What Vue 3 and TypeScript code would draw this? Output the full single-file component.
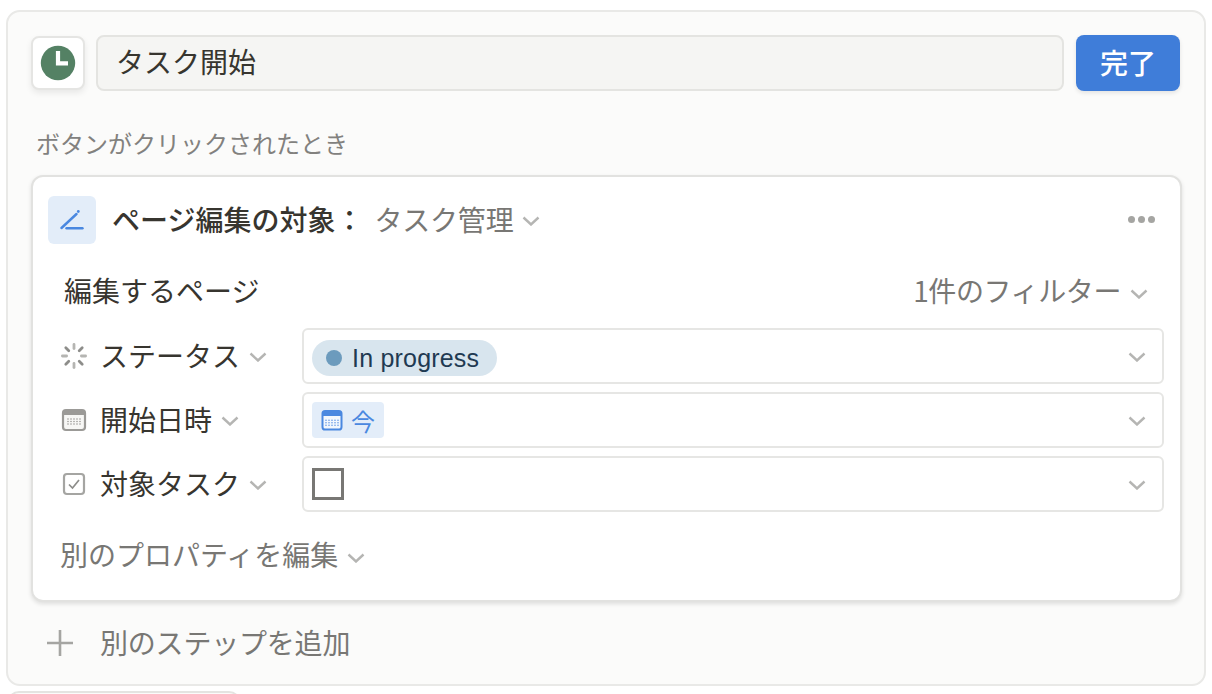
<script setup lang="ts">
interface Row { label: string; icon: string }
const ticks: number[] = [0, 45, 90, 135, 180, 225, 270, 315]
const dots: [number, number][] = []
for (const y of [11.5, 14, 16.5]) for (const x of [6, 9, 12, 15, 18]) dots.push([x, y])
const rows: Row[] = [
  { label: 'ステータス', icon: 'status' },
  { label: '開始日時', icon: 'date' },
  { label: '対象タスク', icon: 'check' },
]
</script>

<template>
  <div class="page">
    <div class="panel">
      <div class="top">
        <div class="emoji">
          <svg width="36" height="36" viewBox="0 0 36 36"><circle cx="18" cy="18" r="17.2" fill="#548164" /><path d="M18 6v12.3h10" fill="none" stroke="#fff" stroke-width="4.2" /></svg>
        </div>
        <div class="name">タスク開始</div>
        <button class="done">完了</button>
      </div>
      <div class="when">ボタンがクリックされたとき</div>
      <div class="card">
        <div class="head">
          <div class="pen">
            <svg width="24" height="24" viewBox="0 0 24 24"><path d="M1.5 20 16.5 6" fill="none" stroke="#4a88e0" stroke-width="2.4" stroke-linecap="round" /><circle cx="18.3" cy="3.5" r="1.4" fill="#4a88e0" /><path d="M6.5 20.2h16" fill="none" stroke="#4a88e0" stroke-width="2.4" stroke-linecap="round" /></svg>
          </div>
          <span class="title">ページ編集の対象：</span>
          <span class="target">タスク管理</span>
          <svg class="chev" width="18" height="10" viewBox="0 0 18 10"><path d="M1.5 1.5 9 8.5l7.5-7" /></svg>
          <div class="more"><i></i><i></i><i></i></div>
        </div>
        <div class="sub">
          <span class="subtitle">編集するページ</span>
          <span class="filter">1件のフィルター</span>
          <svg class="chev" width="18" height="10" viewBox="0 0 18 10"><path d="M1.5 1.5 9 8.5l7.5-7" /></svg>
        </div>
        <div class="rows">
          <div v-for="r in rows" :key="r.label" class="row">
            <div class="prop">
              <svg v-if="r.icon === 'status'" class="pi" width="28" height="28" viewBox="0 0 28 28">
                <rect v-for="a in ticks" :key="a" x="12.6" y="1" width="2.8" height="7" rx="1.4" :fill="a % 90 === 0 ? '#b5b5b2' : '#8d8d8a'" :transform="`rotate(${a} 14 14)`" />
              </svg>
              <svg v-else-if="r.icon === 'date'" class="pi" width="28" height="28" viewBox="0 0 28 28">
                <rect x="3" y="4" width="22" height="20" rx="3" fill="#f7f7f5" stroke="#9b9a97" stroke-width="2.2" />
                <path d="M3 9V7a3 3 0 0 1 3-3h16a3 3 0 0 1 3 3v2z" fill="#9b9a97" />
                <circle v-for="(d, i) in dots" :key="i" :cx="d[0] + 2" :cy="d[1] + 1.5" r=".8" fill="#9b9a97" />
              </svg>
              <svg v-else class="pi" width="28" height="28" viewBox="0 0 28 28">
                <rect x="4" y="4" width="20" height="20" rx="3" fill="#fff" stroke="#a5a5a2" stroke-width="2.2" />
                <path d="m9 14.5 3.5 3.5 6.5-8" fill="none" stroke="#8d8d8a" stroke-width="1.7" />
              </svg>
              <span class="plabel">{{ r.label }}</span>
              <svg class="chev" width="18" height="10" viewBox="0 0 18 10"><path d="M1.5 1.5 9 8.5l7.5-7" /></svg>
            </div>
            <div class="field">
              <span v-if="r.icon === 'status'" class="pill"><i class="dot"></i>In progress</span>
              <span v-else-if="r.icon === 'date'" class="now">
                <svg width="24" height="24" viewBox="0 0 24 24">
                  <rect x="2.5" y="3" width="19" height="18.5" rx="2.6" fill="#f2f7fd" stroke="#4a88e0" stroke-width="2" />
                  <path d="M2.5 8V5.6A2.6 2.6 0 0 1 5.1 3h13.8a2.6 2.6 0 0 1 2.6 2.6V8z" fill="#4a88e0" />
                  <circle v-for="(d, i) in dots" :key="i" :cx="d[0]" :cy="d[1] + .8" r=".7" fill="#4a88e0" />
                </svg>
                <span>今</span>
              </span>
              <span v-else class="box"></span>
              <svg class="chev end" width="18" height="10" viewBox="0 0 18 10"><path d="M1.5 1.5 9 8.5l7.5-7" /></svg>
            </div>
          </div>
        </div>
        <div class="another">
          <span>別のプロパティを編集</span>
          <svg class="chev" width="18" height="10" viewBox="0 0 18 10"><path d="M1.5 1.5 9 8.5l7.5-7" /></svg>
        </div>
      </div>
      <div class="add">
        <svg width="28" height="28" viewBox="0 0 28 28"><path d="M14 1v26M1 14h26" fill="none" stroke="#a5a5a2" stroke-width="2.6" /></svg>
        <span>別のステップを追加</span>
      </div>
    </div>
    <div class="stub"></div>
  </div>
</template>

<style>
html, body { margin: 0; background: #fff; overflow: hidden; }
</style>

<style scoped>
.page {
  height: 694px;
  box-sizing: border-box;
  padding: 10px 6px 0 6px;
  overflow: hidden;
  font-family: "Noto Sans CJK JP", "Liberation Sans", sans-serif;
  color: #37352f;
}
.panel {
  height: 676px;
  box-sizing: border-box;
  padding: 23px 24px 0 23px;
  background: #fbfbfa;
  border: 2px solid #e9e9e7;
  border-radius: 14px;
}
.top { display: flex; align-items: center; gap: 11px; height: 56px; }
.emoji {
  width: 54px;
  height: 54px;
  flex: none;
  box-sizing: border-box;
  display: flex;
  align-items: center;
  justify-content: center;
  background: #fff;
  border: 2px solid #e5e5e3;
  border-radius: 8px;
  box-shadow: 0 3px 6px rgba(15, 15, 15, .08);
}
.name {
  flex: 1;
  height: 56px;
  box-sizing: border-box;
  padding-left: 18px;
  font-size: 28px;
  line-height: 49px;
  background: #f5f5f3;
  border: 2px solid #e4e4e1;
  border-radius: 8px;
}
.done {
  width: 104px;
  height: 56px;
  flex: none;
  margin-left: 1px;
  padding: 0 0 3px;
  border: 0;
  border-radius: 8px;
  background: #3f7dd9;
  color: #fff;
  font: 500 28px "Noto Sans CJK JP", sans-serif;
  box-shadow: 0 2px 4px rgba(15, 15, 15, .1);
}
.when { margin: 37px 0 0 5px; height: 30px; font-size: 24px; line-height: 30px; color: #82817e; }
.card {
  height: 427px;
  width: 1151px;
  margin-top: 17px;
  box-sizing: border-box;
  background: #fff;
  border: 2px solid #e2e2e0;
  border-radius: 12px;
  box-shadow: 0 2px 4px rgba(15, 15, 15, .12);
}
.head { display: flex; align-items: center; height: 48px; margin: 19px 0 0 15px; }
.pen {
  width: 48px;
  height: 48px;
  display: flex;
  align-items: center;
  justify-content: center;
  flex: none;
  border-radius: 6px;
  background: #e3edf9;
}
.title { margin-left: 16px; padding-bottom: 3px; font-size: 28px; font-weight: 500; }
.target { margin-left: 11px; padding-bottom: 3px; font-size: 28px; color: #787774; letter-spacing: -.2px; }
.chev { flex: none; margin-left: 9px; margin-top: 2px; fill: none; stroke: #b5b5b3; stroke-width: 2.4; }
.more { display: flex; gap: 3px; margin: 0 25px 2px auto; }
.more i { width: 7px; height: 7px; border-radius: 50%; background: #a5a5a2; }
.sub { display: flex; align-items: center; height: 40px; margin: 27px 32px 0 31px; }
.sub .chev { margin-top: 5px; }
.subtitle { padding-bottom: 2px; font-size: 28px; }
.filter { margin-left: auto; padding-bottom: 2px; font-size: 28px; color: #787774; letter-spacing: -.4px; }
.rows { display: flex; flex-direction: column; gap: 8px; margin: 17px 16px 0 0; }
.row { display: flex; align-items: center; height: 56px; }
.prop { width: 242px; margin-left: 27px; display: flex; align-items: center; }
.pi { flex: none; }
.plabel { margin-left: 12px; padding-bottom: 2px; font-size: 28px; }
.field {
  flex: 1;
  height: 56px;
  box-sizing: border-box;
  display: flex;
  align-items: center;
  padding: 0 16px 0 8px;
  border: 2px solid #e6e6e4;
  border-radius: 6px;
}
.end { margin-left: auto; }
.pill {
  display: flex;
  align-items: center;
  height: 36px;
  margin-top: 4px;
  padding: 0 18px 0 14px;
  border-radius: 18px;
  background: #d8e5ee;
  color: #1f3a52;
  font: 25px "Liberation Sans", sans-serif;
  letter-spacing: .2px;
}
.dot { width: 16px; height: 16px; border-radius: 50%; background: #6c9bbd; margin-right: 10px; }
.now {
  display: flex;
  align-items: center;
  gap: 7px;
  height: 36px;
  padding: 0 0 0 8px;
  width: 72px;
  box-sizing: border-box;
  border-radius: 4px;
  background: #e3edf9;
  color: #4a88e0;
  font-size: 24px;
}
.box { width: 32px; height: 32px; box-sizing: border-box; border: 3px solid #787774; }
.another { display: flex; align-items: center; margin: 23px 0 0 27px; height: 40px; font-size: 28px; color: #787774; }
.another span { padding-bottom: 2px; }
.another .chev { margin-left: 9px; margin-top: 5px; }
.add { display: flex; align-items: center; height: 40px; margin: 21px 0 0 15px; font-size: 28px; color: #787774; }
.add span { margin-left: 26px; padding-bottom: 2px; letter-spacing: -.2px; }
.stub {
  width: 234px;
  height: 20px;
  margin-top: 5px;
  margin-left: 1px;
  box-sizing: border-box;
  border: 2px solid #e4e4e1;
  border-radius: 12px 12px 0 0;
  background: #fbfbfa;
}
</style>
